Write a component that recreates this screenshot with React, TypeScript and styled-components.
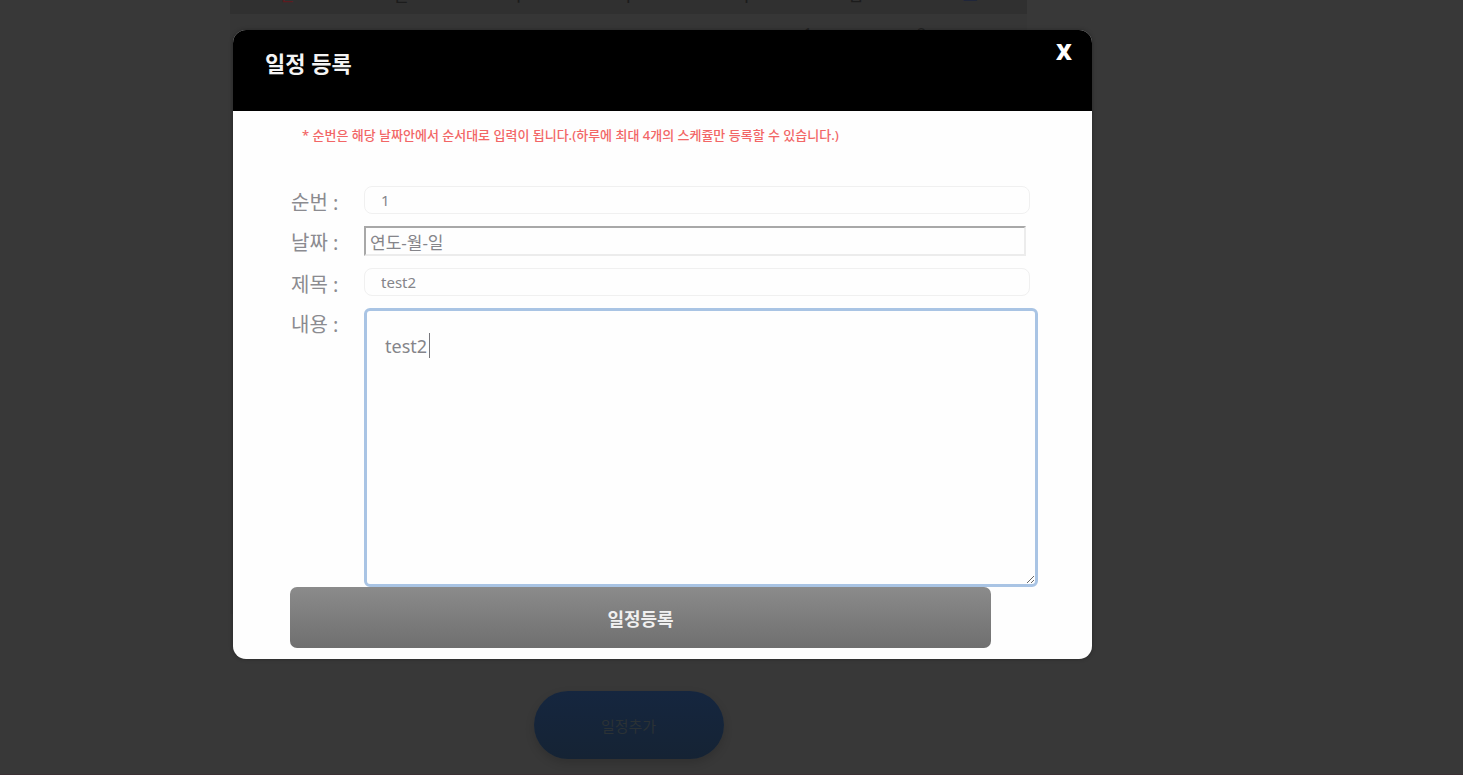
import React from "react";
import styled, { createGlobalStyle } from "styled-components";

const GlobalStyle = createGlobalStyle`
  *, *::before, *::after { box-sizing: border-box; }
  body {
    margin: 0;
    background: #383838;
    font-family: "Noto Sans", "Noto Sans CJK KR", sans-serif;
  }
  button, input, textarea { font-family: inherit; margin: 0; }
`;

const Page = styled.div`
  position: relative;
  height: 100vh;
  overflow: hidden;
  border-bottom: 1px solid #3a3034;
`;

const Schedule = styled.main`
  display: flex;
  flex-direction: column;
  align-items: center;
  margin: 0 436px 0 230px;
`;

const Calendar = styled.table`
  width: 100%;
  margin-top: -24px;
  border-collapse: collapse;
  table-layout: fixed;
  background: #363636;
  color: #222222;
`;

const DayName = styled.th<{ $tone?: string }>`
  height: 38px;
  padding: 0;
  background: #303030;
  color: ${(p) => p.$tone ?? "#1c1c1c"};
  font-size: 16px;
  line-height: 20px;
  font-weight: 500;
`;

const DayCell = styled.td`
  height: 600px;
  padding: 10px 4px;
  vertical-align: top;
  font-size: 16px;
  line-height: 20px;
`;

const AddButton = styled.button`
  width: 190px;
  height: 68px;
  margin-top: 77px;
  border: 0;
  border-radius: 34px;
  background: linear-gradient(#15263f, #152334);
  box-shadow: 0 4px 10px rgba(0, 0, 0, 0.15);
  color: #2b3235;
  font-size: 15px;
`;

const Overlay = styled.div`
  position: absolute;
  inset: 0;
  padding: 30px 371px 0 233px;
`;

const Modal = styled.section`
  overflow: hidden;
  border-radius: 13px;
  background: #fefefe;
  box-shadow: 0 0 4px rgba(0, 0, 0, 0.3);
`;

const ModalHeader = styled.header`
  display: flex;
  justify-content: space-between;
  align-items: flex-start;
  height: 81px;
  padding: 7px 20px 0 32px;
  background: #000000;
  color: #f4f4f4;
`;

const ModalTitle = styled.h2`
  margin: 10px 0 0;
  font-size: 22px;
  line-height: 32px;
  font-weight: 700;
`;

const CloseButton = styled.button`
  padding: 0;
  border: 0;
  background: none;
  color: #ffffff;
  font-family: "Open Sans", "Noto Sans", sans-serif;
  font-size: 22px;
  line-height: 28px;
  font-weight: 800;
`;

const Notice = styled.p`
  margin: 0;
  padding: 15px 24px 42px 69px;
  color: #f26666;
  font-size: 13px;
  line-height: 18px;
  font-weight: 500;
`;

const Form = styled.form`
  padding: 0 54px 11px 57px;
`;

const Fields = styled.div`
  display: grid;
  grid-template-columns: 74px 1fr;
  row-gap: 12px;
`;

const Label = styled.label`
  padding-left: 1px;
  color: #8b8b90;
  font-size: 20px;
  line-height: 34px;
  height: 28px;
  white-space: nowrap;
`;

const TextInput = styled.input`
  width: calc(100% - 8px);
  height: 28px;
  padding: 0 16px;
  border: 1px solid #f0f0f0;
  border-radius: 8px;
  background: #fefefe;
  color: #85858a;
  font-size: 15px;
  outline: none;
`;

const DateInput = styled.input`
  width: calc(100% - 12px);
  height: 30px;
  padding: 0 4px;
  border: 2px solid #ececec;
  border-top-color: #a8a8a8;
  border-left-color: #a8a8a8;
  background: #fefefe;
  color: #85858a;
  font-size: 17px;
  outline: none;
`;

const ContentBox = styled.div`
  position: relative;
`;

const ContentInput = styled.textarea`
  display: block;
  width: 100%;
  height: 279px;
  padding: 22px 18px;
  border: 3px solid #a9c4e4;
  border-radius: 6px;
  background: #fefefe;
  color: #85858a;
  font-size: 18px;
  line-height: 26px;
  outline: none;
  resize: vertical;
  caret-color: transparent;
`;

const Caret = styled.span`
  position: absolute;
  top: 25px;
  left: 65px;
  width: 1px;
  height: 25px;
  background: #77777c;
`;

const SubmitButton = styled.button`
  display: block;
  width: calc(100% - 47px);
  height: 61px;
  border: 0;
  border-radius: 7px;
  background: linear-gradient(#8b8b8b, #6f6f6f);
  color: #f0f0f0;
  font-size: 18px;
  font-weight: 700;
`;

const dayNames = [
  { name: "일", tone: "#5c1c20" },
  { name: "월" },
  { name: "화" },
  { name: "수" },
  { name: "목" },
  { name: "금" },
  { name: "토", tone: "#20263a" },
];

const firstWeek = ["", "", "", "", "", "1", "2"];

export default function App() {
  return (
    <>
      <GlobalStyle />
      <Page>
        <Schedule>
          <Calendar>
            <thead>
              <tr>
                {dayNames.map((d) => (
                  <DayName key={d.name} $tone={d.tone}>{d.name}</DayName>
                ))}
              </tr>
            </thead>
            <tbody>
              <tr>
                {firstWeek.map((d, i) => (
                  <DayCell key={i}>{d}</DayCell>
                ))}
              </tr>
            </tbody>
          </Calendar>
          <AddButton type="button">일정추가</AddButton>
        </Schedule>
        <Overlay>
          <Modal role="dialog" aria-labelledby="modal-title">
            <ModalHeader>
              <ModalTitle id="modal-title">일정 등록</ModalTitle>
              <CloseButton type="button">X</CloseButton>
            </ModalHeader>
            <Notice>
              * 순번은 해당 날짜안에서 순서대로 입력이 됩니다.(하루에 최대 4개의 스케쥴만 등록할 수 있습니다.)
            </Notice>
            <Form onSubmit={(e) => e.preventDefault()}>
              <Fields>
                <Label htmlFor="order">순번 :</Label>
                <TextInput id="order" defaultValue="1" />
                <Label htmlFor="date">날짜 :</Label>
                <DateInput id="date" defaultValue="연도-월-일" />
                <Label htmlFor="title">제목 :</Label>
                <TextInput id="title" defaultValue="test2" />
                <Label htmlFor="content">내용 :</Label>
                <ContentBox>
                  <ContentInput id="content" defaultValue="test2" autoFocus />
                  <Caret aria-hidden="true" />
                </ContentBox>
              </Fields>
              <SubmitButton type="submit">일정등록</SubmitButton>
            </Form>
          </Modal>
        </Overlay>
      </Page>
    </>
  );
}
